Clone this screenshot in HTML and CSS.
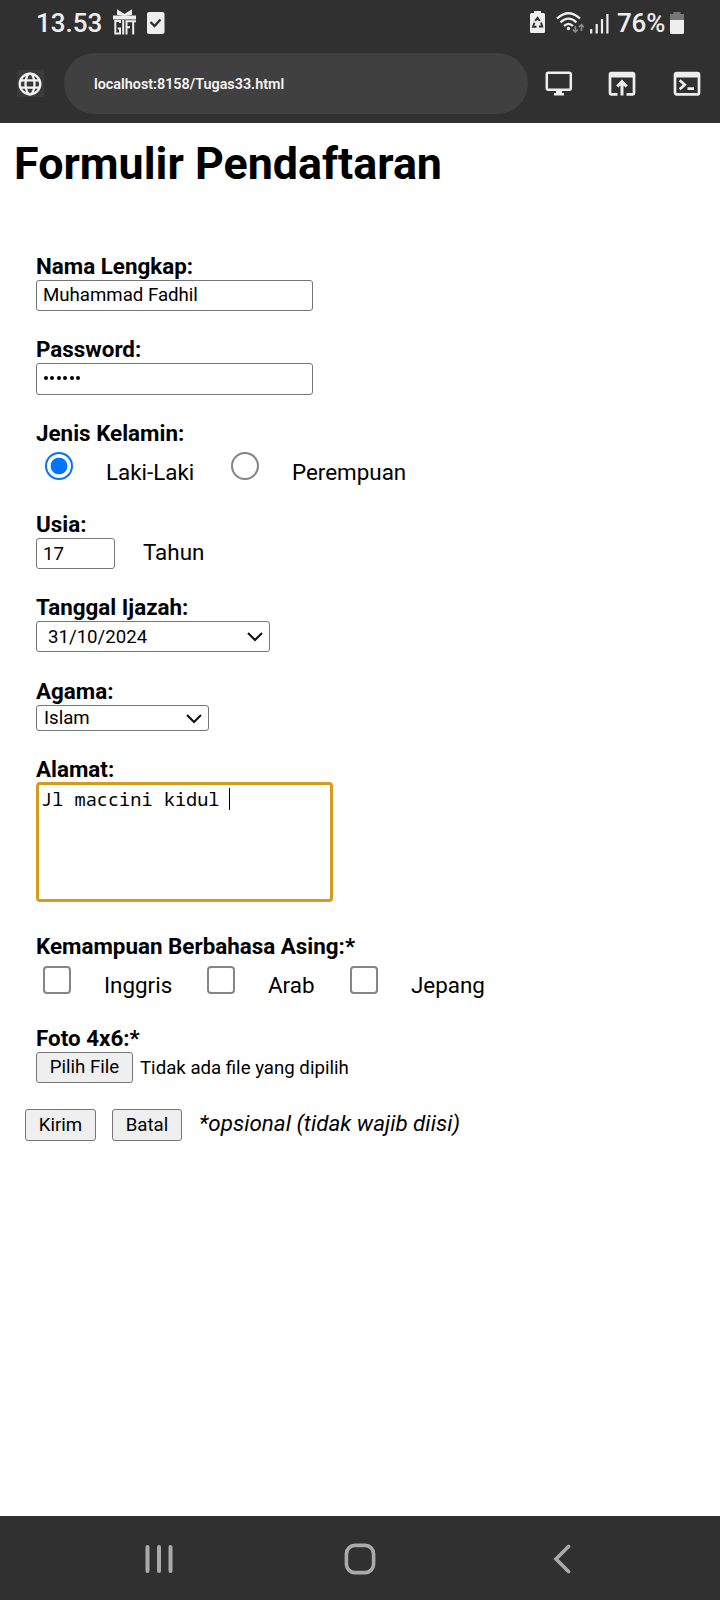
FILE: index.html
```html
<!DOCTYPE html>
<html lang="id">
<head>
<meta charset="utf-8">
<title>Formulir Pendaftaran</title>
<link rel="stylesheet" href="styles.css">
</head>
<body>
<header class="top">
  <div class="status">
    <span class="clock">13.53</span>
    <svg class="gift" width="24" height="26" viewBox="0 0 24 26" fill="none" stroke="#eee" stroke-width="2">
      <path d="M0 8.500h23" stroke-width="4"/>
      <path d="M11.500 6L5 2v3zM11.500 6L18 2v3z" fill="#eee"/>
      <path d="M7 14v-2H2.300v12.500H7v-5H4.800M10.200 11v14.500M13.500 25.500V12.200h4M13.500 18.200h3.500M17 12.200h6M20.200 12v13.500"/>
    </svg>
    <svg class="task" width="18" height="22" viewBox="0 0 18 22">
      <rect width="17.500" height="22" rx="2" fill="#eee"/>
      <path d="M3.500 10l4 4 6-6.500" fill="none" stroke="#303030" stroke-width="2.300"/>
    </svg>
    <svg class="saver" width="15" height="23" viewBox="0 0 15 23">
      <path d="M4 2V0h7v2h2.500Q15 2 15 3.500v17q0 1.500-1.500 1.500h-12Q0 22 0 20.500v-17Q0 2 1.500 2z" fill="#eee"/>
      <path d="M5.200 9.800l2.300-3 2.300 3M11 11.500l1.200 4H9M6.500 15.800H3l1.400-4" fill="none" stroke="#303030" stroke-width="1.900"/>
    </svg>
    <svg class="wifi" width="28" height="22" viewBox="0 0 28 22" fill="none" stroke="#eee" stroke-width="2.300">
      <path d="M1 6.500Q12.500-4 24 6.500M4.500 10.300q8-7.300 16 0M8 14q4.500-4.300 9 0"/>
      <circle cx="12.500" cy="16.500" r="1.700" fill="#eee" stroke="none"/>
      <path d="M19.300 14v6M16.800 17.500l2.500 2.500 2.500-2.500M25.500 19v-6M23 15.200l2.500-2.500 2.500 2.500" stroke="#888" stroke-width="1.700"/>
    </svg>
    <svg class="signal" width="19" height="21" viewBox="0 0 19 21" stroke="#eee" stroke-width="2.200">
      <path d="M1.200 16v4.500M6.700 11v9.500M12 6v14.500M17.400 1v19.500"/>
    </svg>
    <span class="percent">76%</span>
    <svg class="battery" width="14" height="22" viewBox="0 0 14 22">
      <path d="M3.500 2V0h7v2H14v6H0V2z" fill="#777"/>
      <path d="M0 8h14v12.500q0 1.500-1.500 1.500h-11Q0 22 0 20.500z" fill="#eee"/>
    </svg>
  </div>
  <nav class="browser">
    <span class="site">
      <svg width="24" height="24" viewBox="0 0 24 24" fill="none" stroke="#f2f2f2" stroke-width="2.300">
        <circle cx="12" cy="12" r="10.300"/><ellipse cx="12" cy="12" rx="4.500" ry="10.300"/><path d="M3 8.300h18M3 15.700h18"/>
      </svg>
    </span>
    <div class="address">localhost:8158/Tugas33.html</div>
    <svg class="monitor" width="28" height="26" viewBox="0 0 28 26">
      <rect x="1.800" y="1.800" width="24" height="17" rx="1.500" fill="none" stroke="#eee" stroke-width="2.500"/>
      <path d="M11 19h6v3h2v2.500H9V22h2z" fill="#eee"/>
    </svg>
    <svg class="open" width="28" height="26" viewBox="0 0 28 26" fill="none" stroke="#eee" stroke-width="2.700">
      <path d="M9.500 23.300H3.500q-1.500 0-1.500-1.500V3.500Q2 2 3.500 2h21Q26 2 26 3.500v18.300q0 1.500-1.500 1.500h-6"/>
      <path d="M2 4h24" stroke-width="5"/><path d="M14 24.500v-13M9.300 15.500L14 10.700l4.700 4.800" stroke-width="3"/>
    </svg>
    <svg class="terminal" width="28" height="26" viewBox="0 0 28 26" fill="none" stroke="#eee" stroke-width="2.700">
      <rect x="2" y="2" width="24" height="21.300" rx="1.500"/>
      <path d="M2 4h24" stroke-width="5"/><path d="M6.700 9.300l5 4.400-5 4.500M14.500 17.700h6.500"/>
    </svg>
  </nav>
</header>

<main class="page">
  <h1 class="title">Formulir Pendaftaran</h1>
  <form class="form">
    <div class="field">
      <label class="label">Nama Lengkap:</label>
      <div class="box wide">Muhammad Fadhil</div>
    </div>
    <div class="field">
      <label class="label">Password:</label>
      <div class="box wide dots"><i></i><i></i><i></i><i></i><i></i><i></i></div>
    </div>
    <div class="field">
      <span class="label">Jenis Kelamin:</span>
      <div class="choices radios">
        <span class="radio on"></span><span class="choice">Laki-Laki</span>
        <span class="radio"></span><span class="choice">Perempuan</span>
      </div>
    </div>
    <div class="field">
      <label class="label">Usia:</label>
      <div class="age"><div class="box small">17</div><span class="unit">Tahun</span></div>
    </div>
    <div class="field">
      <label class="label">Tanggal Ijazah:</label>
      <div class="box date">31/10/2024
        <svg width="16" height="10" viewBox="0 0 16 10" fill="none" stroke="#111" stroke-width="2"><path d="M1 1l7 7 7-7"/></svg>
      </div>
    </div>
    <div class="field">
      <label class="label">Agama:</label>
      <div class="box select">Islam
        <svg width="16" height="10" viewBox="0 0 16 10" fill="none" stroke="#111" stroke-width="2"><path d="M1 1l7 7 7-7"/></svg>
      </div>
    </div>
    <div class="field">
      <label class="label">Alamat:</label>
      <div class="area"><span class="typed">Jl maccini kidul </span><span class="caret"></span></div>
    </div>
    <div class="field">
      <span class="label">Kemampuan Berbahasa Asing:*</span>
      <div class="choices checks">
        <span class="check"></span><span class="choice">Inggris</span>
        <span class="check"></span><span class="choice">Arab</span>
        <span class="check"></span><span class="choice">Jepang</span>
      </div>
    </div>
    <div class="field">
      <label class="label">Foto 4x6:*</label>
      <div class="file"><span class="button pick">Pilih File</span><span class="nofile">Tidak ada file yang dipilih</span></div>
    </div>
    <div class="actions">
      <span class="button send">Kirim</span>
      <span class="button cancel">Batal</span>
      <em class="note">*opsional (tidak wajib diisi)</em>
    </div>
  </form>
</main>

<footer class="keys">
  <svg width="28" height="30" viewBox="0 0 28 30" stroke="#aaa" stroke-width="4" stroke-linecap="round"><path d="M2.500 3v24M14 3v24M25.500 3v24"/></svg>
  <svg class="home" width="32" height="32" viewBox="0 0 32 32" fill="none" stroke="#aaa" stroke-width="3.600"><rect x="2.400" y="2.400" width="27.200" height="27.200" rx="8.500"/></svg>
  <svg width="18" height="30" viewBox="0 0 18 30" fill="none" stroke="#aaa" stroke-width="3.600" stroke-linecap="round"><path d="M15.500 2.500L3 15l12.500 12.500"/></svg>
</footer>
</body>
</html>
```
FILE: styles.css
```css
* { box-sizing: border-box; }
body {
  margin: 0;
  width: 720px;
  height: 1600px;
  display: flex;
  flex-direction: column;
  background: #fff;
  color: #000;
  font-family: Roboto, sans-serif;
  font-size: 22.4px;
  overflow: hidden;
}
svg { display: block; flex: none; }

.top { height: 123px; background: #303030; color: #eee; }
.status { height: 53px; display: flex; align-items: flex-start; padding-left: 36px; }
.clock, .percent { font-size: 26px; line-height: 30px; font-weight: 500; margin-top: 8px; white-space: nowrap; }
.clock { width: 77px; }
.gift { margin-top: 9px; }
.task { margin: 12px 0 0 10px; }
.saver { margin: 11px 0 0 365px; }
.wifi { margin: 12px 0 0 11px; }
.signal { margin: 13px 0 0 6px; }
.percent { width: 51px; margin-left: 8px; letter-spacing: -0.2px; }
.battery { margin: 12px 0 0 2px; }

.browser { display: flex; align-items: center; height: 61px; padding-left: 17px; }
.site { width: 27px; height: 27px; display: flex; align-items: center; padding-left: 1px; background: #3a3a3a; }
.address {
  width: 464px;
  height: 61px;
  margin-left: 20px;
  padding-left: 30px;
  border-radius: 31px;
  background: #404040;
  color: #f4f4f4;
  font-size: 14.35px;
  font-weight: 600;
  line-height: 63px;
}
.monitor { margin-left: 17px; }
.open { margin-left: 35px; }
.terminal { margin-left: 37px; }

.page { flex: 1; }
.title { margin: 13px 0 0 14px; font-size: 44.8px; line-height: 56px; font-weight: 700; white-space: nowrap; }
.form {
  display: grid;
  grid-template-rows: 83px 84px 91px 83px 84px 78px 177px 92px 84px 32px;
  margin: 61px 0 0 36px;
}
.label { display: block; height: 27px; line-height: 27px; font-weight: 700; white-space: nowrap; }
.box {
  display: flex;
  align-items: center;
  height: 31px;
  padding: 0 6px;
  border: 1px solid #767676;
  border-radius: 3px;
  font-size: 18.65px;
  line-height: 22px;
}
.wide { width: 277px; padding-bottom: 2px; }
.dots { height: 32px; gap: 2.400px; padding: 0 0 2px 7px; }
.dots i { width: 4px; height: 4px; border-radius: 50%; background: #000; }

.choices { display: flex; height: 48px; }
.choice { line-height: 27px; white-space: nowrap; }
.radio { flex: none; width: 28px; height: 28px; margin: 5px 0 0 9px; border: 2px solid #858585; border-radius: 50%; }
.radio.on { border-color: #0075ff; background: radial-gradient(circle, #0075ff 8px, #fff 8.700px); }
.radios .choice { width: 91px; margin: 12px 0 0 33px; }
.radios .radio.on + .choice { width: 116px; }
.check { flex: none; width: 28px; height: 28px; border: 2px solid #858585; border-radius: 4px; }

.age { display: flex; }
.small { width: 79px; }
.unit { margin: 1px 0 0 28px; line-height: 27px; }
.date { width: 234px; padding: 0 6px 0 11px; justify-content: space-between; }
.select { width: 173px; height: 26px; padding: 0 6px 0 7px; justify-content: space-between; }
.select svg { margin-top: 2px; }
.area {
  display: flex;
  width: 297px;
  height: 120px;
  margin-top: -1px;
  padding: 3px 2px;
  border: 3px solid #d59b20;
  border-radius: 4px;
  font-family: "Noto Sans Mono", "DejaVu Sans Mono", monospace;
  font-size: 18.6px;
  line-height: 22px;
}
.typed { white-space: pre; }
.caret { width: 1px; height: 22px; margin-left: -2px; background: #000; }

.checks { display: grid; grid-template-columns: 61px 103px 61px 82px 61px 80px; padding-left: 7px; }
.checks .check { margin-top: 6px; }
.checks .choice { margin-top: 12px; }

.button {
  display: flex;
  align-items: center;
  justify-content: center;
  height: 31px;
  border: 1px solid #767676;
  border-radius: 3px;
  background: #efefef;
  font-size: 18.65px;
  line-height: 22px;
  white-space: nowrap;
}
.file { display: flex; }
.pick { width: 97px; padding-bottom: 1px; }
.nofile { margin: 5px 0 0 7px; font-size: 18.65px; line-height: 22px; white-space: nowrap; }
.actions { display: flex; margin-left: -11px; }
.actions .button { height: 32px; padding-bottom: 1px; }
.send { width: 71px; margin-right: 16px; }
.cancel { width: 70px; margin-right: 17px; }
.note { line-height: 27px; white-space: nowrap; margin-top: 1px; }

.keys { height: 84px; background: #303030; display: flex; align-items: center; padding: 2px 149px 0 145px; }
.home { margin: 0 auto 0 171px; }
```
